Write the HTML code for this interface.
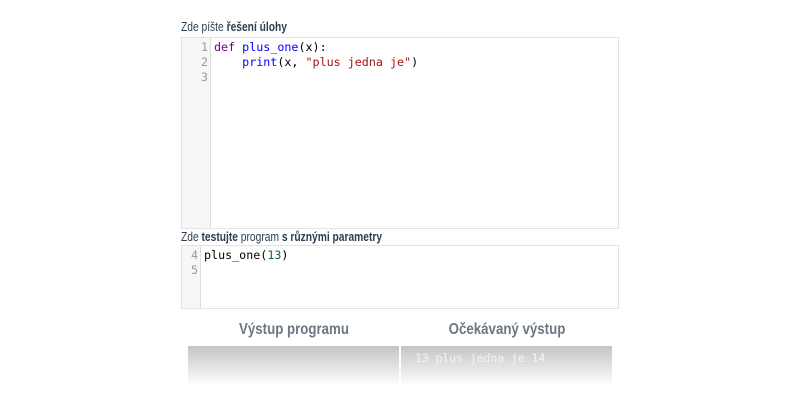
<!DOCTYPE html><html><head><style>
body{margin:0;width:800px;height:400px;background:#fff;font-family:"Liberation Sans",sans-serif;position:relative;overflow:hidden}
.lbl{position:absolute;left:181px;font-size:12.5px;color:#2c3e50;transform:scaleX(0.82);transform-origin:left;white-space:nowrap}
.lbl b{font-weight:bold}
.ed{position:absolute;left:181px;width:436px;border:1px solid #e3e3e3;background:#fff}
.g{position:absolute;left:0;top:0;bottom:0;background:#f7f7f7;border-right:1px solid #ddd}
.code{position:absolute;top:2px;font-family:"DejaVu Sans Mono","Liberation Mono",monospace;font-size:11.7px;line-height:15px;white-space:pre;color:#000}
.ln{position:absolute;top:2px;font-family:"DejaVu Sans Mono",monospace;font-size:11.7px;line-height:15px;color:#999;text-align:right;white-space:pre}
.k{color:#708}.f{color:#00f}.s{color:#a11}.n{color:#164}
.h{position:absolute;top:321px;font-size:16px;font-weight:bold;color:#6b7785;text-align:center;width:212px;transform:scaleX(0.83)}
.box{position:absolute;top:346px;height:40px;width:211px;background:linear-gradient(#c4c4c4,#fff)}
</style></head><body>
<div class="lbl" style="top:20px">Zde píšte <b>řešení úlohy</b></div>
<div class="ed" style="top:37px;height:190px">
<div class="g" style="width:28px"></div>
<div class="ln" style="left:0;width:26px">1
2
3</div>
<div class="code" style="left:32px"><span class="k">def</span> <span class="f">plus_one</span>(x):
    <span class="f">print</span>(x, <span class="s">"plus jedna je"</span>)</div>
</div>
<div class="lbl" style="top:230px">Zde <b>testujte</b> program <b>s různými parametry</b></div>
<div class="ed" style="top:245px;height:62px">
<div class="g" style="width:18px"></div>
<div class="ln" style="left:0;width:16px">4
5</div>
<div class="code" style="left:22px">plus_one(<span class="n">13</span>)</div>
</div>
<div class="h" style="left:188px">Výstup programu</div>
<div class="h" style="left:401px">Očekávaný výstup</div>
<div class="box" style="left:188px"></div>
<div class="box" style="left:401px"><div style="position:absolute;left:14px;top:5px;font-family:'DejaVu Sans Mono',monospace;font-size:11.4px;color:#f4f4f4">13 plus jedna je 14</div></div>
</body></html>
